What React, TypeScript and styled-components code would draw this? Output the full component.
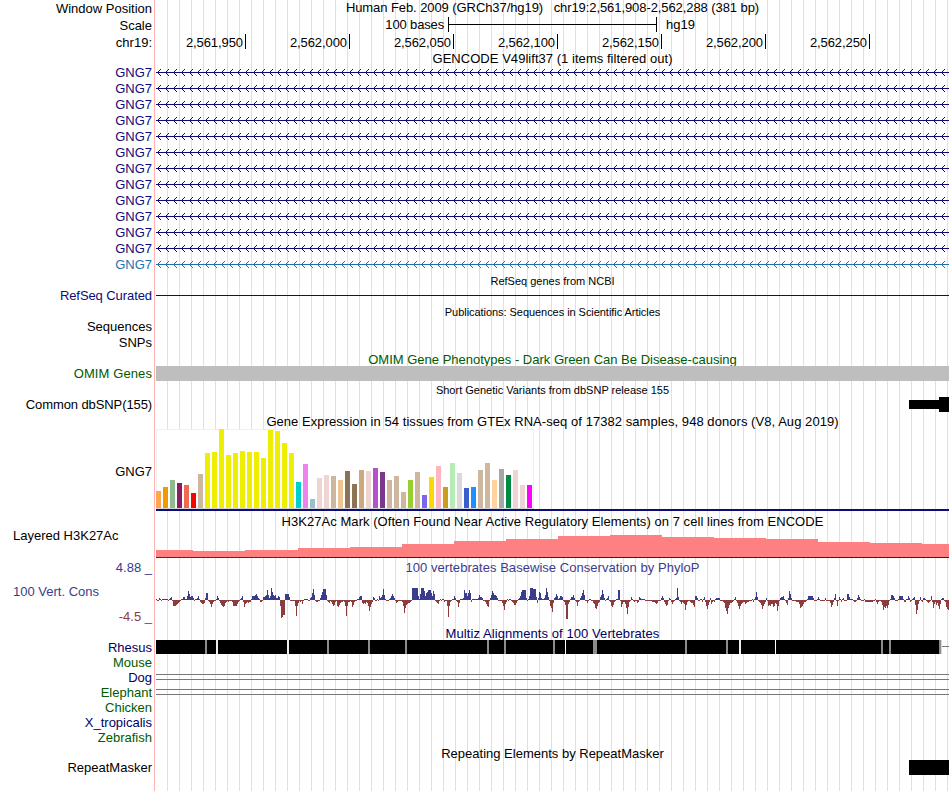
import { FC, ReactNode } from 'react';
import styled, { createGlobalStyle } from 'styled-components';

const NAVY = '#0c0c78';
const TRACK_START = 156;
const TRACK_WIDTH = 793;

const transcripts = [...Array(12).fill(NAVY), '#1a73b0'];

const ticks = [
  '2,561,950',
  '2,562,000',
  '2,562,050',
  '2,562,100',
  '2,562,150',
  '2,562,200',
  '2,562,250',
];

// [height, color] for each of the 54 tissues
const tissues: [number, string][] = [
  [17, '#ffa54f'],
  [21, '#ee9a00'],
  [28, '#8fbc8f'],
  [25, '#8b1c62'],
  [23, '#ee6a50'],
  [15, '#ff0000'],
  [34, '#cdb79e'],
  ...[55, 56, 79, 53, 55, 57, 56, 56, 50, 78, 77, 65, 55].map(
    (h): [number, string] => [h, '#eeee00']
  ),
  [26, '#00cdcd'],
  [44, '#ee82ee'],
  [9, '#9ac0cd'],
  [30, '#eed5d2'],
  [33, '#eed5d2'],
  [32, '#cdb79e'],
  [28, '#eec591'],
  [37, '#8b7355'],
  [24, '#8b7355'],
  [38, '#cdaa7d'],
  [37, '#eed5d2'],
  [40, '#b452cd'],
  [36, '#7a378b'],
  [28, '#cdb79e'],
  [32, '#cdb79e'],
  [16, '#cdb79e'],
  [28, '#9acd32'],
  [36, '#cdb79e'],
  [13, '#7a67ee'],
  [31, '#ffd700'],
  [42, '#ffb6c1'],
  [21, '#cd9b1d'],
  [45, '#b4eeb4'],
  [35, '#d9d9d9'],
  [20, '#3a5fcd'],
  [21, '#1e90ff'],
  [38, '#cdb79e'],
  [45, '#cdb79e'],
  [28, '#ffd39b'],
  [39, '#a6a6a6'],
  [33, '#008b45'],
  [38, '#eed5d2'],
  [23, '#eed5d2'],
  [23, '#ff00ff'],
];

// [start, height] of every step in the histone signal
const histone = [
  [156, 7],
  [193, 6],
  [245, 7],
  [298, 9],
  [350, 10],
  [402, 13],
  [454, 16],
  [506, 18],
  [558, 21],
  [610, 22],
  [662, 20],
  [714, 19],
  [766, 18],
  [818, 15],
  [870, 14],
  [922, 13],
];

// one score per pixel column, from the left edge of the track
const phyloP = `
1 -1 -1 2 1 -1 1 1 1 1 1 1 -1 1 2 3 -1 -6 -6 -6 -5 -4 -3 -2 -1 1 1 3 3 1
1 4 9 6 3 4 4 2 -1 1 1 2 4 1 -2 -3 -4 -4 -3 2 7 7 -1 -2 -4 -7 -4 -2 -1 -1
1 4 2 -1 -3 -5 -6 -7 -6 -3 -2 -1 -2 -1 -1 -1 -2 -6 -6 -6 -6 -4 -2 -1 1 2 4 -2 -7 -4
-3 -2 -3 -2 -2 1 4 4 4 5 6 4 2 1 -2 -2 -1 3 3 4 5 10 5 2 4 12 8 5 4 5
2 2 4 3 -6 -18 -17 -15 -15 6 6 6 6 3 -1 -1 -1 -1 -1 -6 -16 -6 -3 -1 -2 -1 -4 -1 1 1
1 1 -1 -1 2 3 7 11 5 -1 -2 -2 -1 -1 2 5 8 11 11 11 5 -1 -2 -3 -1 -2 -4 -6 -5 -2
-1 -6 -7 -5 -3 -2 -2 -1 -2 -6 -16 -6 -2 -2
-1 -2 -7 -5 -2 -1 -1 1 1 3 4 4 -3 -4 -3 -4 -2 -3 -6 -11 -7 -4 -2 3 2 -1 -1 1 -1 4
2 3 5 11 5 1 -1 -1 -1 1 2 4 6 4 2 -1 -3 -2 -1 -1 -1 -1 -2 -6 -13 -8 -5 -4 -3 -3
-2 -1 12 12 12 12 12 12 4 1 6 12 12 12 9 4 7 8 10 10 10 7 4 9 6 -1 -2 -3 -4 -1
1 -1 1 1 -2 -1 -1 -6 -17 -6 -2 -1 1 1 4 2 -1 -2 -7 -3 1 1 1 2 10 7 7 4 7 10
7 -2 1 1 1 1 1 1 2 5 3 3 2 -1 -1 -2 -4 -6 -7 -1 2 5 9 7 5 5 4 2 -1 -1
-1 -1 -3 -6 -10 -4 -2 1 -1 1 1 -1 -2 -3 -5 -5 -3 -1 1 2 4 8 10 10 10 10 2 -1 1 4
12 12 12 11 11 11 3 -3 2 8 7 2 1 1 2 5 12 8 3 -1
-6 -8 -12 -3 2 3 6 4 1 2 4 4 3 -1 -2 -5 -19 -19 -4 -2 1 3 3 5 2 -1 -2 -6 -2 -1
2 4 7 10 5 -1 -1 -3 -1 1 1 -1 -1 -3 -4 -8 -9 -6 -3 -2 3 5 10 6 2 -1 1 2 4 -1
-2 -6 -7 -5 -2 -1 1 1 10 10 -1 -7 -4 -2 -2 -4 -8 -14 -7 -2 -1 3 1 -1 -2 -1 -1 -3 -2 3
2 1 1 1 1 -1 -1 -1 -1 -1 -1 -1 -2 -2 -2 -3 -4 -3 -1 -1 -1 2 4 2 -2 -4 -6 -5 -1 2
1 -2 -4 -2 -1 1 2 12 3 -1 -2 -4 -2 -3 -4 -10 -5 -2 -1 -1 -2 -3 -3 -5 -7 4 4 2 -1 -1
1 1 -2 1 3 -2 -6 -9 -5 -2 2 -4 -2 -1 -2 1 2 2 2 2 -1 -1 -1 -2 -3 -8 -11 -14 -8 -5
-3 -3 -2 -1 1 3 -1 -3 -6 -9 -6 -4 -3 -2 -2 -4 -3 -2 -2 -1
-1 -1 1 -2 1 3 8 3 -1 -2 -3 -5 -9 -6 -4 -2 2 -1 -6 -5 -6 -4 -4 -7 -6 -3 -4 -11 -6 -1
2 3 3 4 1 -1 -3 -5 2 9 6 2 -1 -1 -1 -1 -2 -2 -2 -4 -8 -7 -6 -4 -2 -2 -1 1 4 4
4 4 4 2 -1 -1 -1 1 3 1 -1 -1 -1 -1 -1 2 -1 -1 -1 -1 -3 -7 -5 -2 2 6 -1 -6 -1 3
1 -2 1 2 -1 -1 -1 6 6 3 1 1 1 -1 -2 -2 -1 2 5 3 1 -1 -1 -1 1 -2 -2 -2 -2 -2
-2 -2 -2 -1 -1 1 -2 -4 -2 -1 -1 -2 -5 -10 -7 -8 -6 -8 -5 -1 1 5 5 4 2 -1 -1 -1 1 4
4 4 4 1 -2 -2 1 1 4 2 -2 -1 1 2 3 -5 -14 -10 -4 -1 3 -1 -2 2 2 1 -1 -2 -3 -2
-1 4 -2 -8 -4 -2 -5 -3 -6 -9 -4 1 2 2 -1 -2 -7 -9 -10
`
  .trim()
  .split(/\s+/)
  .map(Number);

// [start, width, color] of the breaks in the rhesus alignment
const breaks: [number, number, string][] = [
  [205, 2, '#8c8c8c'],
  [216, 2, '#ececec'],
  [287, 2, '#ececec'],
  [327, 2, '#8c8c8c'],
  [368, 2, '#8c8c8c'],
  [405, 2, '#8c8c8c'],
  [487, 2, '#8c8c8c'],
  [504, 2, '#8c8c8c'],
  [553, 2, '#8c8c8c'],
  [565, 1, '#ffffff'],
  [593, 4, '#8c8c8c'],
  [685, 2, '#8c8c8c'],
  [726, 2, '#8c8c8c'],
  [739, 2, '#ececec'],
  [775, 1, '#ffffff'],
  [881, 2, '#8c8c8c'],
  [889, 2, '#8c8c8c'],
  [939, 2, '#8c8c8c'],
  [941, 1, '#dcdcdc'],
];

const species = [
  { name: 'Mouse', color: '#005a00' },
  { name: 'Dog', color: '#000064', gap: true },
  { name: 'Elephant', color: '#005a00', gap: true },
  { name: 'Chicken', color: '#005a00' },
  { name: 'X_tropicalis', color: '#000064' },
  { name: 'Zebrafish', color: '#005a00' },
];

const arrows = Array.from({ length: 99 }, (_, i) => i * 8 + 1)
  .map((x) => `M${x + 4} 4L${x + 0.5} 7.5L${x + 4} 11`)
  .join('');

const Row: FC<{
  label?: string;
  color?: string;
  height: number;
  spacing?: number;
  children?: ReactNode;
}> = ({ label, color, height, spacing, children }) => (
  <Line $height={height}>
    <Label $color={color} $spacing={spacing}>
      {label}
    </Label>
    <Track>{children}</Track>
  </Line>
);

const Heading: FC<{
  height: number;
  color?: string;
  small?: boolean;
  spacing?: number;
  children: ReactNode;
}> = ({ height, color, small, spacing, children }) => (
  <Row height={height}>
    <Title $color={color} $small={small} $spacing={spacing} $drop={1}>
      {children}
    </Title>
  </Row>
);

const Intron: FC<{ color: string }> = ({ color }) => (
  <Drawing width={TRACK_WIDTH} height={16}>
    <path d="M0 7.5H793" stroke={color} />
    <path d={arrows} stroke={color} fill="none" />
  </Drawing>
);

const Expression = () => (
  <Drawing width={TRACK_WIDTH} height={85} shapeRendering="crispEdges">
    <rect width={378} height={80} fill="#f0f0f0" />
    <rect x={1} y={1} width={376} height={78} fill="#fff" />
    <rect y={79} width={378} height={1} fill="#d3d3d3" />
    {tissues.map(([height, color], i) => (
      <rect
        key={i}
        x={i * 7}
        y={79 - height}
        width={5}
        height={height}
        fill={color}
      />
    ))}
    <rect y={80} width={TRACK_WIDTH} height={2} fill={NAVY} />
  </Drawing>
);

const Histone = () => (
  <Drawing width={TRACK_WIDTH} height={29} shapeRendering="crispEdges">
    {histone.map(([start, height], i) => {
      const end = histone[i + 1]?.[0] ?? TRACK_START + TRACK_WIDTH;
      return (
        <rect
          key={start}
          x={start - TRACK_START}
          y={28 - height}
          width={end - start}
          height={height}
          fill="#ff8080"
        />
      );
    })}
    <rect y={28} width={142} height={1} fill="#78143c" />
    <rect x={142} y={28} width={651} height={1} fill="#46142d" />
  </Drawing>
);

const Conservation = () => (
  <Drawing width={TRACK_WIDTH} height={51} shapeRendering="crispEdges">
    {phyloP.map((score, x) => (
      <rect
        key={x}
        x={x}
        y={score > 0 ? 25 - score : 25}
        width={1}
        height={Math.abs(score)}
        fill={score > 0 ? '#3c3c8c' : '#8c3c3c'}
      />
    ))}
  </Drawing>
);

const Rhesus = () => (
  <Drawing width={TRACK_WIDTH} height={15} shapeRendering="crispEdges">
    <rect width={785} height={14} fill="#000" />
    <rect x={786} y={6} width={7} height={1} fill="#787878" />
    {breaks.map(([start, width, color]) => (
      <rect
        key={start}
        x={start - TRACK_START}
        width={width}
        height={14}
        fill={color}
      />
    ))}
  </Drawing>
);

const App = () => (
  <>
    <GlobalStyle />
    <Browser>
      <Row label="Window Position" height={17}>
        <Title $spacing={-0.08} $height={15}>
          {'Human Feb. 2009 (GRCh37/hg19)   chr19:2,561,908-2,562,288 (381 bp)'}
        </Title>
      </Row>
      <Row label="Scale" height={17}>
        <Scale>
          <ScaleText>100 bases</ScaleText>
          <ScaleBar />
          <ScaleText>hg19</ScaleText>
        </Scale>
      </Row>
      <Row label="chr19:" height={17}>
        <Ruler>
          {ticks.map((tick) => (
            <Tick key={tick}>{tick}</Tick>
          ))}
        </Ruler>
      </Row>
      <Heading height={14} spacing={0.04}>
        GENCODE V49lift37 (1 items filtered out)
      </Heading>
      {transcripts.map((color, i) => (
        <Row key={i} label="GNG7" color={color} height={16}>
          <Intron color={color} />
        </Row>
      ))}
      <Heading height={15} small>
        RefSeq genes from NCBI
      </Heading>
      <Row label="RefSeq Curated" color={NAVY} height={16} spacing={-0.08}>
        <Thin />
      </Row>
      <Heading height={15} small spacing={-0.05}>
        Publications: Sequences in Scientific Articles
      </Heading>
      <Row label="Sequences" height={16} />
      <Row label="SNPs" height={16} />
      <Heading height={15} color="#005a00">
        OMIM Gene Phenotypes - Dark Green Can Be Disease-causing
      </Heading>
      <Row label="OMIM Genes" color="#005a00" height={16} spacing={0.1}>
        <Block $height={15} $color="#bebebe" />
      </Row>
      <Heading height={15} small>
        Short Genetic Variants from dbSNP release 155
      </Heading>
      <Row label="Common dbSNP(155)" height={16} spacing={-0.1}>
        <Variants>
          <Block $width={30} $height={9} />
          <Block $width={10} $height={15} />
        </Variants>
      </Row>
      <Heading height={16} spacing={0.055}>
        Gene Expression in 54 tissues from GTEx RNA-seq of 17382 samples, 948
        donors (V8, Aug 2019)
      </Heading>
      <Row label="GNG7" height={85}>
        <Expression />
      </Row>
      <Line $height={46}>
        <Signal>Layered H3K27Ac</Signal>
        <Track>
          <Title $height={15} $spacing={0.05}>
            H3K27Ac Mark (Often Found Near Active Regulatory Elements) on 7 cell
            lines from ENCODE
          </Title>
          <Histone />
        </Track>
      </Line>
      <Line $height={66}>
        <Range>
          <Limit>4.88 _</Limit>
          <RangeName>100 Vert. Cons</RangeName>
          <Limit $negative>-4.5 _</Limit>
        </Range>
        <Track>
          <Title $height={15} $spacing={0.04} $color="#3c3c8c">
            100 vertebrates Basewise Conservation by PhyloP
          </Title>
          <Conservation />
        </Track>
      </Line>
      <Heading height={14} color="#000064" spacing={0.08}>
        Multiz Alignments of 100 Vertebrates
      </Heading>
      <Row label="Rhesus" color="#000064" height={15}>
        <Rhesus />
      </Row>
      {species.map(({ name, color, gap }) => (
        <Row key={name} label={name} color={color} height={15}>
          {gap && <Gap />}
        </Row>
      ))}
      <Heading height={15}>Repeating Elements by RepeatMasker</Heading>
      <Row label="RepeatMasker" height={16}>
        <Variants>
          <Block $width={40} $height={15} />
        </Variants>
      </Row>
    </Browser>
  </>
);

export default App;

const GlobalStyle = createGlobalStyle`
  body {
    margin: 0;
    background: #fff;
  }
`;

const Browser = styled.main`
  box-sizing: border-box;
  width: 949px;
  height: 791px;
  overflow: hidden;
  font: 13px 'Liberation Sans', Arial, sans-serif;
  color: #000;
  background:
    linear-gradient(#ffb4b4, #ffb4b4) 154px 0 / 1px 100% no-repeat,
    repeating-linear-gradient(90deg, #dcdcff 0 1px, transparent 1px 12px) 167px
      0 / 782px 100% no-repeat;
`;

const Line = styled.div<{ $height: number }>`
  display: grid;
  grid-template-columns: 152px 793px;
  column-gap: 4px;
  height: ${(p) => p.$height}px;
  line-height: ${(p) => p.$height}px;
`;

const Label = styled.div<{ $color?: string; $spacing?: number }>`
  color: ${(p) => p.$color ?? '#000'};
  letter-spacing: ${(p) => p.$spacing ?? 0}px;
  text-align: right;
  white-space: nowrap;
`;

const Track = styled.div`
  min-width: 0;
`;

const Title = styled.div<{
  $color?: string;
  $small?: boolean;
  $spacing?: number;
  $height?: number;
  $drop?: number;
}>`
  color: ${(p) => p.$color ?? '#000'};
  font-size: ${(p) => (p.$small ? 11 : 13)}px;
  letter-spacing: ${(p) => p.$spacing ?? 0}px;
  ${(p) => p.$height && `height: ${p.$height}px; line-height: ${p.$height}px;`}
  padding-top: ${(p) => p.$drop ?? 0}px;
  text-align: center;
  white-space: pre;
`;

const Drawing = styled.svg`
  display: block;
`;

const Scale = styled.div`
  display: flex;
  height: 15px;
  line-height: 15px;
`;

const ScaleText = styled.div`
  flex: 0 0 auto;
  &:first-child {
    width: 288px;
    margin-right: 4px;
    letter-spacing: -0.15px;
    text-align: right;
  }
  &:last-child {
    margin-left: 9px;
  }
`;

const ScaleBar = styled.div`
  box-sizing: border-box;
  width: 209px;
  border: solid #000;
  border-width: 0 1px;
  background: linear-gradient(#000, #000) 0 7px / 100% 1px no-repeat;
`;

const Ruler = styled.div`
  display: flex;
`;

const Tick = styled.div`
  box-sizing: border-box;
  width: 104px;
  height: 15px;
  line-height: 17px;
  padding-right: 2px;
  border-right: 1px solid #000;
  letter-spacing: -0.08px;
  text-align: right;
  &:first-child {
    width: 90px;
  }
`;

const Thin = styled.div`
  height: 1px;
  margin-top: 7px;
  background: ${NAVY};
`;

const Block = styled.div<{
  $width?: number;
  $height: number;
  $color?: string;
}>`
  width: ${(p) => (p.$width ? `${p.$width}px` : '100%')};
  height: ${(p) => p.$height}px;
  background: ${(p) => p.$color ?? '#000'};
`;

const Variants = styled.div`
  display: flex;
  align-items: center;
  justify-content: flex-end;
  height: 15px;
`;

const Signal = styled.div`
  padding-left: 13px;
  line-height: 43px;
`;

const Range = styled.div`
  display: flex;
  flex-direction: column;
  justify-content: space-between;
  height: 65px;
  color: #3c3c8c;
  line-height: 16px;
`;

const Limit = styled.div<{ $negative?: boolean }>`
  color: ${(p) => (p.$negative ? '#8c3c3c' : 'inherit')};
  text-align: right;
`;

const RangeName = styled.div`
  margin-top: -1px;
  padding-left: 13px;
`;

const Gap = styled.div`
  box-sizing: border-box;
  height: 6px;
  margin-top: 4px;
  border: solid #787878;
  border-width: 1px 0;
`;
